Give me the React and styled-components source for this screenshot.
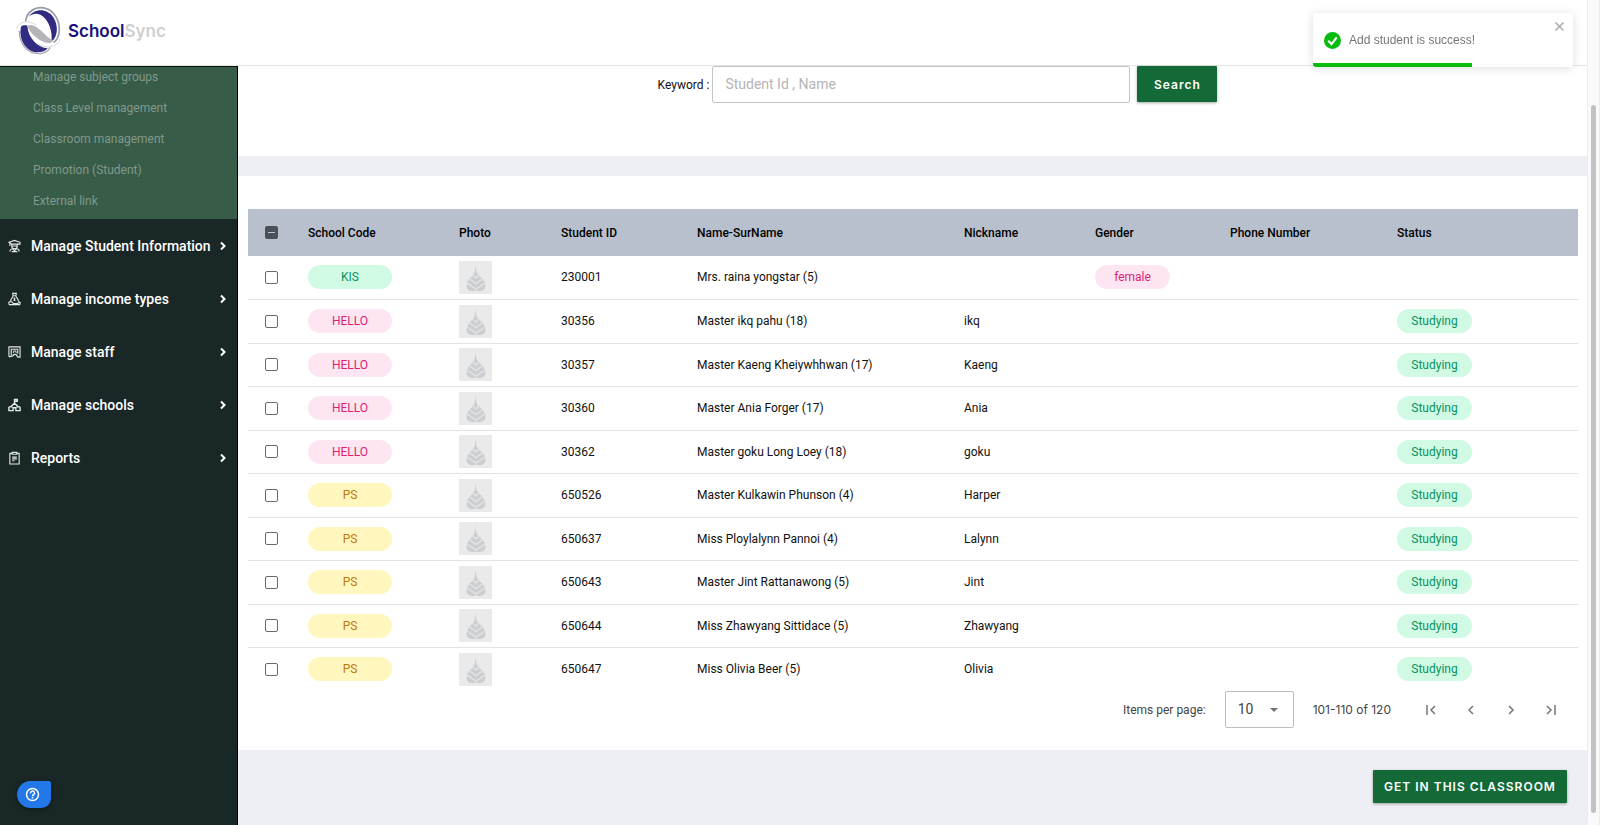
import React from 'react';
import styled, { createGlobalStyle } from 'styled-components';

const GlobalStyle = createGlobalStyle`
  * {
    box-sizing: border-box;
  }
  body {
    margin: 0;
    background: #fff;
    color: #111;
    font-family: Roboto, 'Liberation Sans', sans-serif;
    font-size: 12px;
  }
  button, input, select {
    font-family: inherit;
  }
`;

const Page = styled.div`
  display: grid;
  grid-template-columns: minmax(0, 1fr) 13px;
  min-height: 100vh;
`;

const Shell = styled.div`
  display: flex;
  flex-direction: column;
`;

const ScrollTrack = styled.div`
  display: flex;
  padding: 105px 3px 12px 3px;
  background: #fafafa;
  border-left: 1px solid #ededed;
  border-right: 1px solid #ededed;
`;

const ScrollThumb = styled.div`
  flex: 1;
  border-radius: 4px;
  background: #c2c2c2;
`;

const Header = styled.header`
  display: flex;
  align-items: center;
  gap: 7px;
  height: 66px;
  padding: 0 16px 4px;
  border-bottom: 1px solid #e4e4e4;
`;

const Brand = styled.span`
  color: #15107c;
  font-family: Inter, sans-serif;
  font-size: 17px;
  font-weight: 600;
`;

const BrandLight = styled.span`
  color: #cfcfd1;
`;

const Body = styled.div`
  display: flex;
  flex: 1;
`;

const Sidebar = styled.nav`
  display: flex;
  flex-direction: column;
  flex: 0 0 238px;
  min-width: 0;
  background: #1a2727;
  border-right: 1px solid #000;
`;

const SubMenu = styled.div`
  display: flex;
  flex-direction: column;
  justify-content: flex-end;
  height: 153px;
  padding-bottom: 2px;
  overflow: hidden;
  border-top: 1px solid #0d1512;
  background: #375c48;
`;

const SubLink = styled.a`
  flex-shrink: 0;
  padding-left: 33px;
  color: #82998c;
  font-size: 12px;
  line-height: 31px;
  text-decoration: none;
`;

const MenuButton = styled.button`
  display: flex;
  align-items: center;
  gap: 10px;
  height: 53px;
  padding: 0 10px 0 8px;
  border: none;
  background: none;
  color: #fff;
  font-size: 14px;
  font-weight: 500;
  text-align: left;
  svg {
    flex-shrink: 0;
  }
`;

const MenuLabel = styled.span`
  flex: 1;
  min-width: 0;
  white-space: nowrap;
`;

const Content = styled.main`
  display: flex;
  flex-direction: column;
  flex: 1;
  min-width: 0;
  background: #eeeff4;
`;

const SearchBar = styled.form`
  display: flex;
  justify-content: center;
  align-items: flex-start;
  height: 90px;
  padding-left: 50px;
  background: #fff;
`;

const SearchLabel = styled.label`
  margin-right: 3px;
  line-height: 38px;
`;

const SearchInput = styled.input`
  width: 418px;
  height: 37px;
  margin-right: 7px;
  padding: 0 12px 2px;
  border: 1px solid #c4c4c4;
  border-radius: 2px;
  font-size: 14px;
  &::placeholder {
    color: #b5b5b5;
  }
`;

const PrimaryButton = styled.button`
  width: ${props => (props.$tall ? '80px' : '194px')};
  height: ${props => (props.$tall ? '36px' : '33px')};
  padding: 0;
  border: none;
  border-radius: 1px;
  background: #136a37;
  box-shadow: 0 1px 3px rgba(0, 0, 0, 0.35);
  color: #fff;
  font-family: Inter, sans-serif;
  font-size: 12px;
  font-weight: 600;
  letter-spacing: 1px;
`;

const Panel = styled.section`
  margin-top: 20px;
  padding: 33px 9px 22px 10px;
  background: #fff;
`;

const Table = styled.table`
  width: 100%;
  table-layout: fixed;
  border-collapse: collapse;
`;

const HeadCell = styled.th`
  height: 47px;
  padding: 0;
  background: #b9c0cd;
  color: #000;
  font-size: 12px;
  font-weight: 500;
  text-align: left;
`;

const Row = styled.tr`
  height: 43px;
  border-bottom: 1px solid #e2e2e2;
  &:nth-child(even) {
    height: 44px;
  }
  &:last-child {
    border-bottom: none;
  }
`;

const Cell = styled.td`
  padding: 0;
  font-size: 12px;
  white-space: nowrap;
`;

const Check = styled.input`
  appearance: none;
  display: block;
  width: 13px;
  height: 13px;
  margin: 0 0 0 17px;
  border: 1px solid #6a6a6a;
  border-radius: 2px;
  &:indeterminate {
    border-color: #4b4f56;
    background: linear-gradient(#c3c8d0, #c3c8d0) center / 7px 1px no-repeat #4b4f56;
  }
`;

const tones = {
  green: { bg: '#d0fae4', fg: '#07935f' },
  pink: { bg: '#fde6f2', fg: '#dc1f70' },
  yellow: { bg: '#fff7bd', fg: '#c07a0a' },
};

const Chip = styled.span`
  display: block;
  width: ${props => (props.$wide ? '84px' : '75px')};
  border-radius: 12px;
  background: ${props => tones[props.$tone].bg};
  color: ${props => tones[props.$tone].fg};
  line-height: 24px;
  text-align: center;
`;

const Photo = styled.svg`
  display: block;
  width: 33px;
  height: 33px;
  background: #eaeaea;
`;

const Pager = styled.div`
  display: flex;
  align-items: center;
  justify-content: flex-end;
  height: 37px;
  padding-right: 7px;
  color: #444;
`;

const SizeBox = styled.span`
  display: grid;
  align-items: center;
  width: 69px;
  margin: 0 19px;
  color: #757575;
  svg {
    grid-area: 1 / 1;
    justify-self: end;
    margin-right: 16px;
    pointer-events: none;
  }
`;

const SizeSelect = styled.select`
  grid-area: 1 / 1;
  appearance: none;
  height: 37px;
  padding: 0 12px 2px;
  border: 1px solid #bdbdbd;
  border-radius: 2px;
  background: #fff;
  color: #444;
  font-size: 14px;
`;

const Range = styled.span`
  margin-right: 20px;
  font-family: Inter, sans-serif;
`;

const PageButton = styled.button`
  display: flex;
  align-items: center;
  justify-content: center;
  width: 40px;
  height: 36px;
  padding: 0;
  border: none;
  background: none;
  color: #757575;
`;

const Actions = styled.div`
  display: flex;
  justify-content: flex-end;
  padding: 20px;
`;

const Toast = styled.div`
  position: fixed;
  top: 13px;
  right: 27px;
  display: flex;
  gap: 8px;
  width: 260px;
  height: 54px;
  padding-left: 11px;
  border-radius: 3px;
  background: #fff;
  box-shadow: 0 1px 10px rgba(0, 0, 0, 0.14);
  color: #757575;
  font-family: 'Liberation Sans', Arial, sans-serif;
  svg {
    align-self: center;
  }
`;

const ToastText = styled.span`
  flex: 1;
  align-self: center;
`;

const ToastClose = styled.button`
  align-self: flex-start;
  padding: 8px;
  border: none;
  background: none;
  color: #aaa;
  svg {
    display: block;
  }
`;

const Progress = styled.div`
  position: absolute;
  left: 0;
  bottom: 0;
  width: 61%;
  height: 4px;
  border-radius: 0 0 0 3px;
  background: #07bc0c;
`;

const HelpButton = styled.button`
  position: fixed;
  left: 17px;
  bottom: 17px;
  width: 34px;
  height: 27px;
  padding: 0 4px 0 0;
  border: none;
  border-radius: 14px 2px 10px 14px;
  background: #2278e8;
  box-shadow: 0 1px 5px rgba(0, 0, 0, 0.4);
  color: #fff;
  svg {
    display: block;
    margin: 0 auto;
  }
`;

const Logo = () => (
  <svg width="45" height="49" viewBox="45 20 135 147" fill="none">
    <path d="M74 66C76 40 98 25 120 25C152 25 175 56 175 90C175 108 168 122 158 130" stroke="#9a9aa8" strokeWidth="5" />
    <path d="M84 52C96 30 136 22 157 54C173 80 171 112 151 128C156 98 144 60 118 46C106 41 94 43 84 52Z" fill="#312c82" />
    <path d="M55 94C55 132 78 163 112 163C128 163 141 156 148 144" stroke="#a9a9b0" strokeWidth="4" />
    <path d="M60 82C52 118 74 158 110 159C124 159 134 155 140 147C110 144 82 118 79 79C72 77 64 78 60 82Z" fill="#312c82" />
    <path d="M79 79C92 72 108 82 122 96C134 108 144 118 157 124C150 133 136 133 122 125C102 114 86 98 79 79Z" fill="#b5b5b9" />
    <path d="M47 88C52 66 84 60 106 78M112 134C136 150 170 144 177 118" stroke="#d6d6da" strokeWidth="3" />
  </svg>
);

const menuIcons = {
  student: (
    <>
      <path d="M1 3L7 1L13 3V5L10 5L7 5L4 5L1 3ZM2 4V7M4 5V7C4 9 5.500 10 7 10S10 9 10 7V5M4 7H10" />
      <path d="M2 13C2 11 4 10 5 10L7 12L9 10C11 10 12 11 12 13M4 13H10" />
    </>
  ),
  income: (
    <>
      <path d="M5 1H9L8.500 3.500H5.500ZM5.500 4L3 8V10M8.500 4L11 8V10M7 5.500V9M6 6.500H8M6 8.500H8" />
      <path d="M1 10H4L6 12H10L13 10M1 13H13M1 10V13M13 10V13" />
    </>
  ),
  staff: (
    <path d="M1 12V1.500H13V12.500H10M3.500 12V4H10.500V9M1 12H3.500M6 8A1.500 1.500 0 1 1 8.500 8M5 12C5 10 6 9.500 7.500 9.500S10 10.500 10 12.500" />
  ),
  school: (
    <path d="M7 5V1H10V3H7M3 9L7 5L11 9M1 9H4V8M13 9H10V8M1 9V13H5.500V10H8.500V13H13V9" strokeWidth="1.500" />
  ),
  report: (
    <path d="M4.500 2H2V13.500H12V2H9.500M4.500 1H9.500V3H4.500ZM4.500 6H9.500M4.500 8H9.500M4.500 10H7" />
  ),
};

const MenuIcon = ({ name }) => (
  <svg width="13" height="14" viewBox="0 0 14 14" fill="none" stroke="#e4e8e8" strokeWidth="1.200">
    {menuIcons[name]}
  </svg>
);

const Chevron = () => (
  <svg width="8" height="14" viewBox="3 0 8 14" fill="none" stroke="#fff" strokeWidth="2">
    <path d="M5 3.500L8.500 7L5 10.500" />
  </svg>
);

const Leaf = () => (
  <Photo viewBox="0 0 33 33" aria-label="No photo">
    <path d="M16.500 2C16.800 9 17.500 12 20 14.500C24 18 26.500 21 26.500 25C26.500 29 22 31.500 17 29.500C12 31.500 7.500 29 7.500 25C7.500 21 10 18 13.500 14.500C15.800 12 16.300 9 16.500 2Z" fill="#cccfd2" />
    <path d="M10 17.500L17 22.500L24 17.500M8 22L17 28L26 22M13 13.500L17 17L20.500 13.500" fill="none" stroke="#e2e3e4" strokeWidth="1.500" />
  </Photo>
);

const subLinks = [
  'Manage subject groups',
  'Class Level management',
  'Classroom management',
  'Promotion (Student)',
  'External link',
];

const menu = [
  ['student', 'Manage Student Information'],
  ['income', 'Manage income types'],
  ['staff', 'Manage staff'],
  ['school', 'Manage schools'],
  ['report', 'Reports'],
];

const columns = [
  ['School Code', 151],
  ['Photo', 102],
  ['Student ID', 136],
  ['Name-SurName', 267],
  ['Nickname', 131],
  ['Gender', 135],
  ['Phone Number', 167],
  ['Status', 181],
];

const schoolTone = { KIS: 'green', HELLO: 'pink', PS: 'yellow' };

const students = [
  { school: 'KIS', id: '230001', name: 'Mrs. raina yongstar (5)', gender: 'female' },
  { school: 'HELLO', id: '30356', name: 'Master ikq pahu (18)', nick: 'ikq', status: 'Studying' },
  { school: 'HELLO', id: '30357', name: 'Master Kaeng Kheiywhhwan (17)', nick: 'Kaeng', status: 'Studying' },
  { school: 'HELLO', id: '30360', name: 'Master Ania Forger (17)', nick: 'Ania', status: 'Studying' },
  { school: 'HELLO', id: '30362', name: 'Master goku Long Loey (18)', nick: 'goku', status: 'Studying' },
  { school: 'PS', id: '650526', name: 'Master Kulkawin Phunson (4)', nick: 'Harper', status: 'Studying' },
  { school: 'PS', id: '650637', name: 'Miss Ploylalynn Pannoi (4)', nick: 'Lalynn', status: 'Studying' },
  { school: 'PS', id: '650643', name: 'Master Jint Rattanawong (5)', nick: 'Jint', status: 'Studying' },
  { school: 'PS', id: '650644', name: 'Miss Zhawyang Sittidace (5)', nick: 'Zhawyang', status: 'Studying' },
  { school: 'PS', id: '650647', name: 'Miss Olivia Beer (5)', nick: 'Olivia', status: 'Studying' },
];

const pageButtons = [
  ['First page', 'M5 4V14M13 5L9 9L13 13'],
  ['Previous page', 'M11 5L7 9L11 13'],
  ['Next page', 'M7 5L11 9L7 13'],
  ['Last page', 'M13 4V14M5 5L9 9L5 13'],
];

const setIndeterminate = el => {
  if (el) el.indeterminate = true;
};

const StudentRow = ({ student }) => (
  <Row>
    <Cell>
      <Check type="checkbox" aria-label={`Select ${student.name}`} />
    </Cell>
    <Cell>
      <Chip $wide $tone={schoolTone[student.school]}>{student.school}</Chip>
    </Cell>
    <Cell>
      <Leaf />
    </Cell>
    <Cell>{student.id}</Cell>
    <Cell>{student.name}</Cell>
    <Cell>{student.nick}</Cell>
    <Cell>{student.gender && <Chip $tone="pink">{student.gender}</Chip>}</Cell>
    <Cell />
    <Cell>{student.status && <Chip $tone="green">{student.status}</Chip>}</Cell>
  </Row>
);

const App = () => (
  <Page>
    <GlobalStyle />
    <Shell>
      <Header>
        <Logo />
        <Brand>
          School<BrandLight>Sync</BrandLight>
        </Brand>
      </Header>
      <Body>
        <Sidebar>
          <SubMenu>
            {subLinks.map(label => (
              <SubLink key={label} href="#">{label}</SubLink>
            ))}
          </SubMenu>
          {menu.map(([icon, label]) => (
            <MenuButton key={label} type="button">
              <MenuIcon name={icon} />
              <MenuLabel>{label}</MenuLabel>
              <Chevron />
            </MenuButton>
          ))}
        </Sidebar>
        <Content>
          <SearchBar>
            <SearchLabel htmlFor="keyword">Keyword :</SearchLabel>
            <SearchInput id="keyword" type="text" placeholder="Student Id , Name" />
            <PrimaryButton type="button" $tall>Search</PrimaryButton>
          </SearchBar>
          <Panel>
            <Table>
              <colgroup>
                <col width="60" />
                {columns.map(([label, width]) => (
                  <col key={label} width={width} />
                ))}
              </colgroup>
              <thead>
                <tr>
                  <HeadCell>
                    <Check type="checkbox" ref={setIndeterminate} aria-label="Select all" />
                  </HeadCell>
                  {columns.map(([label]) => (
                    <HeadCell key={label}>{label}</HeadCell>
                  ))}
                </tr>
              </thead>
              <tbody>
                {students.map(student => (
                  <StudentRow key={student.id} student={student} />
                ))}
              </tbody>
            </Table>
            <Pager>
              <label htmlFor="page-size">Items per page:</label>
              <SizeBox>
                <SizeSelect id="page-size" defaultValue="10">
                  <option>10</option>
                  <option>20</option>
                  <option>50</option>
                </SizeSelect>
                <svg width="8" height="4" viewBox="0 0 8 4">
                  <path d="M0 0H8L4 4Z" fill="currentColor" />
                </svg>
              </SizeBox>
              <Range>101-110 of 120</Range>
              {pageButtons.map(([label, d]) => (
                <PageButton key={label} type="button" aria-label={label}>
                  <svg width="18" height="18" viewBox="0 0 18 18" fill="none" stroke="currentColor" strokeWidth="1.500">
                    <path d={d} />
                  </svg>
                </PageButton>
              ))}
            </Pager>
          </Panel>
          <Actions>
            <PrimaryButton type="button">GET IN THIS CLASSROOM</PrimaryButton>
          </Actions>
        </Content>
      </Body>
    </Shell>
    <ScrollTrack>
      <ScrollThumb />
    </ScrollTrack>
    <Toast role="status">
      <svg width="17" height="17" viewBox="0 0 24 24">
        <circle cx="12" cy="12" r="12" fill="#07bc0c" />
        <path d="M6 12.500L10.500 17L18 7.500" fill="none" stroke="#fff" strokeWidth="3" />
      </svg>
      <ToastText>Add student is success!</ToastText>
      <ToastClose type="button" aria-label="Close">
        <svg width="11" height="11" viewBox="0 0 11 11" fill="none" stroke="currentColor" strokeWidth="1.500">
          <path d="M1.500 1.500L9.500 9.500M9.500 1.500L1.500 9.500" />
        </svg>
      </ToastClose>
      <Progress />
    </Toast>
    <HelpButton type="button" aria-label="Help">
      <svg width="15" height="15" viewBox="0 0 15 15" fill="none" stroke="currentColor" strokeWidth="1.500">
        <circle cx="7.500" cy="7.500" r="6" />
        <path d="M5.500 6.200A2 2 0 1 1 8.500 7.800Q7.500 8.200 7.500 9.200M7.500 10V11.400" />
      </svg>
    </HelpButton>
  </Page>
);

export default App;
